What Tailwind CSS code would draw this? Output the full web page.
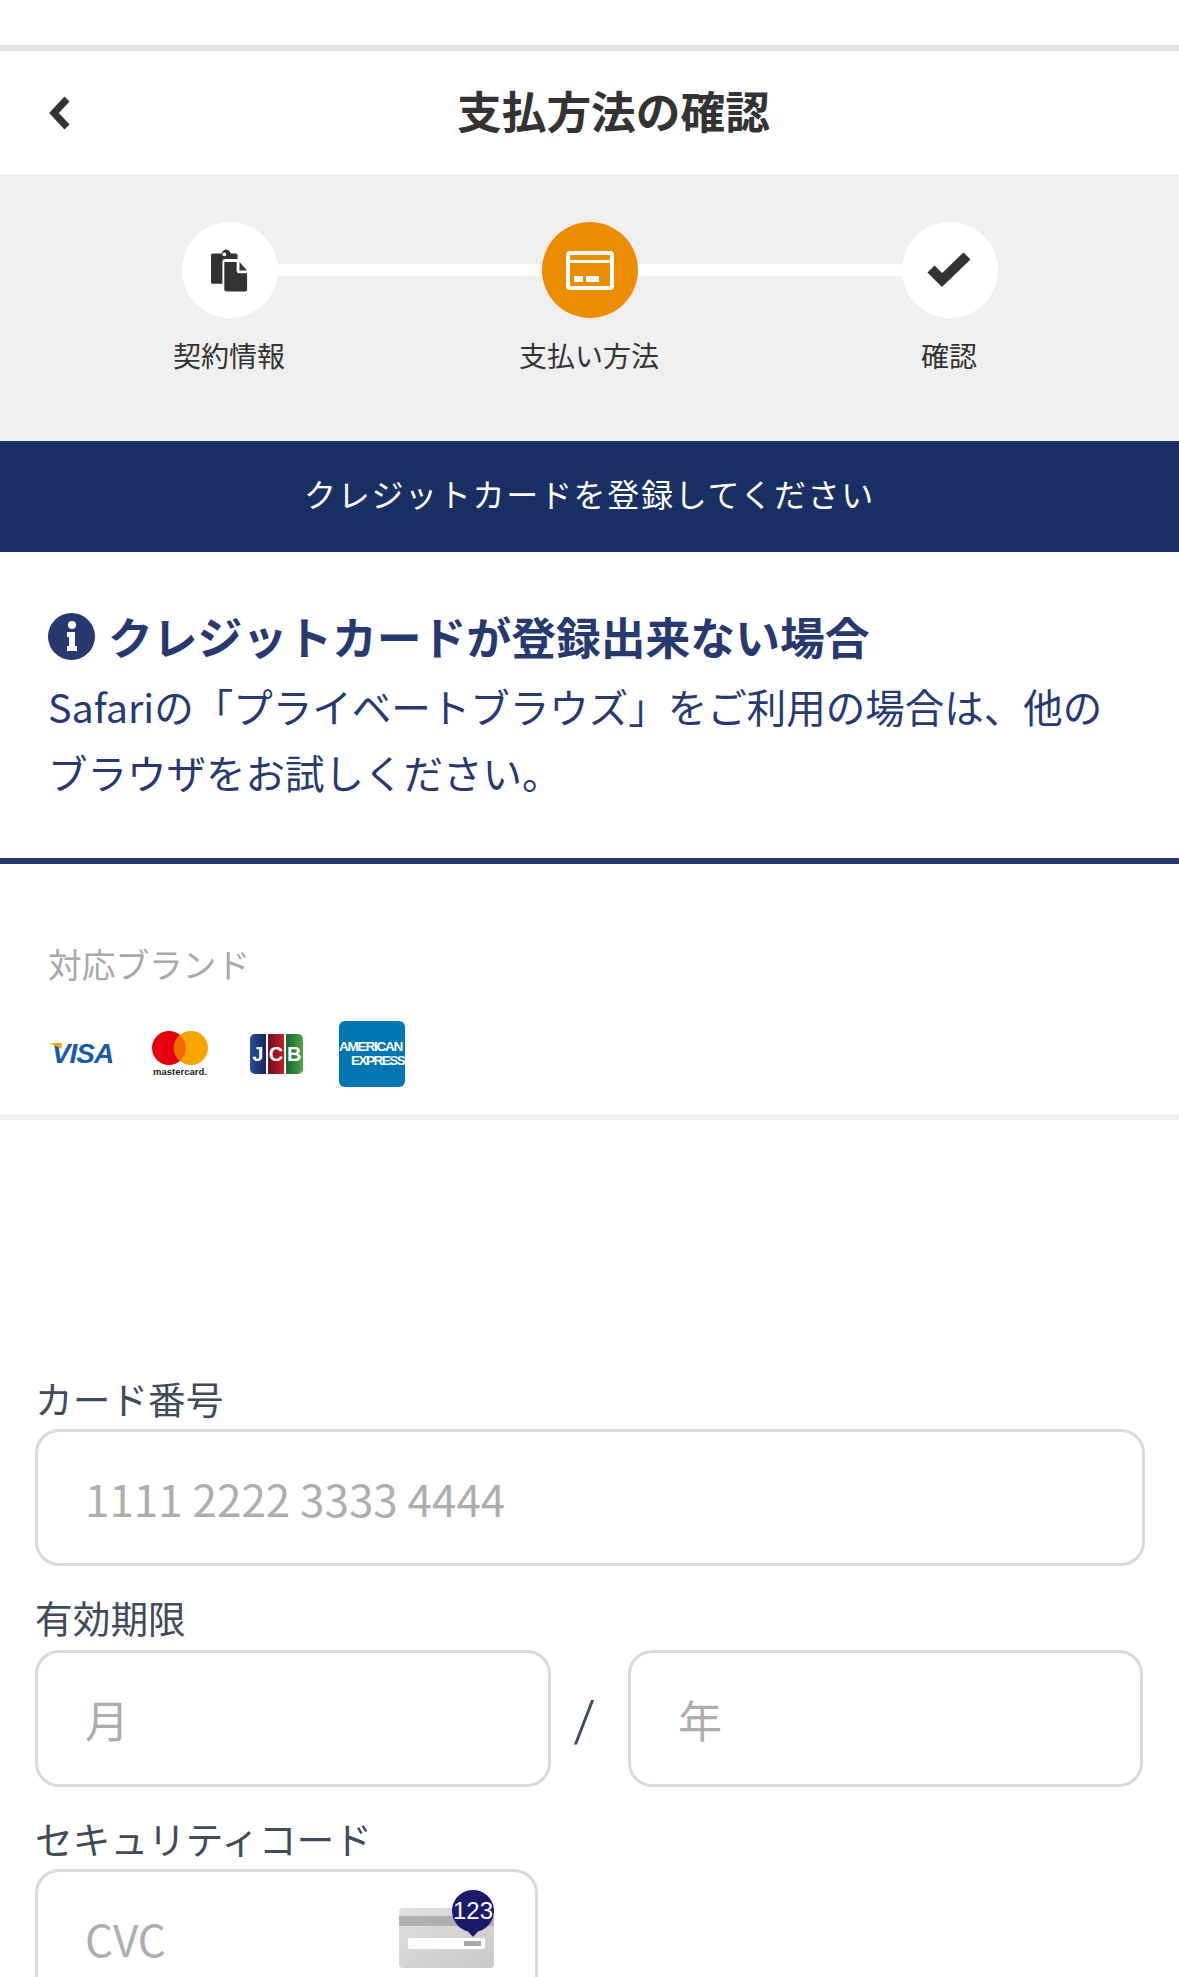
<!DOCTYPE html>
<html lang="ja">
    <head>
        <meta charset="UTF-8">
        <meta name="viewport" content="width=device-width, initial-scale=1.0">
        <title>支払方法の確認</title>
        <script src="https://cdn.jsdelivr.net/npm/@tailwindcss/browser@4"></script>
    </head>
    <body class="bg-white h-[1977px] overflow-hidden font-['Noto_Sans_CJK_JP','Noto_Sans',sans-serif] text-[#333]">
        <div class="h-[45px]"></div>
        <div class="h-[6px] bg-[#e3e3e3]"></div>

        <!-- header -->
        <header class="h-[123px] flex items-center">
            <svg class="ml-[48px] w-[24px] h-[34px]" viewBox="0 0 24 34"><path d="M19 3 L6 17 L19 31" fill="none" stroke="#333" stroke-width="7"/></svg>
            <h1 class="ml-[385px] mb-[5px] text-[44.7px] font-bold leading-none">支払方法の確認</h1>
        </header>

        <!-- stepper -->
        <section class="h-[267px] bg-[#efefef] pt-[48px]">
            <div class="flex items-center pl-[182px] pr-[181px]">
                <div class="w-[96px] h-[96px] rounded-full bg-white flex items-center justify-center">
                    <svg class="w-[38px] h-[43px]" viewBox="0 0 40 44">
                        <path d="M2 4 H11 Q13 0 16 0 Q19 0 21 4 H26 Q28 4 28 6 V10 H15 Q12 10 12 13 V36 H2 Q0 36 0 34 V6 Q0 4 2 4 Z" fill="#333"/>
                        <circle cx="14" cy="5" r="2" fill="#fff"/>
                        <path d="M15 13 H27 V22 Q27 25 30 25 H38 V42 Q38 44 36 44 H17 Q14 44 14 42 V14 Q14 13 15 13 Z M30 13 L38 22 H30 Z" fill="#333"/>
                    </svg>
                </div>
                <div class="flex-1 h-[12px] bg-white"></div>
                <div class="w-[96px] h-[96px] rounded-full bg-[#ec8c00] flex items-center justify-center">
                    <svg class="w-[48px] h-[39px]" viewBox="0 0 48 39">
                        <path fill-rule="evenodd" d="M4 0 H44 Q48 0 48 4 V35 Q48 39 44 39 H4 Q0 39 0 35 V4 Q0 0 4 0 Z M4 4 V9 H44 V4 Z M4 12 V35 H44 V12 Z" fill="#fff"/>
                        <rect x="8" y="25" width="9" height="6" fill="#fff"/>
                        <rect x="20" y="25" width="13" height="6" fill="#fff"/>
                    </svg>
                </div>
                <div class="flex-1 h-[12px] bg-white"></div>
                <div class="w-[96px] h-[96px] rounded-full bg-white flex items-center justify-center">
                    <svg class="w-[46px] h-[36px] mr-[3px]" viewBox="0 0 46 36"><path d="M5 17 L16 28 L41 4" fill="none" stroke="#333" stroke-width="10"/></svg>
                </div>
            </div>
            <div class="grid grid-cols-3 w-[1080px] ml-[49px] mt-[17px] text-center text-[28px] leading-[40px]">
                <div>契約情報</div>
                <div>支払い方法</div>
                <div>確認</div>
            </div>
        </section>

        <!-- banner -->
        <div class="h-[111px] pb-[8px] bg-[#183063] text-white text-[32px] tracking-[1.7px] flex items-center justify-center">クレジットカードを登録してください</div>

        <!-- notice -->
        <section class="h-[312px] border-b-[6px] border-[#27396f] pl-[48px] pt-[54px] text-[#27396f]">
            <div class="flex items-center h-[60px]">
                <span class="w-[47px] h-[47px] rounded-full bg-[#27396f] flex items-center justify-center">
                    <svg class="w-[12px] h-[30px]" viewBox="0 0 12 30"><circle cx="6" cy="4" r="4" fill="#fff"/><path d="M1 11 H9 V25 H11 V30 H1 V25 H3 V16 H1 Z" fill="#fff"/></svg>
                </span>
                <h2 class="ml-[13px] text-[44.8px] font-bold leading-none">クレジットカードが登録出来ない場合</h2>
            </div>
            <p class="mt-[7px] text-[39.5px] leading-[65.5px] whitespace-nowrap">Safariの「プライベートブラウズ」をご利用の場合は、他の<br>ブラウザをお試しください。</p>
        </section>

        <!-- brands -->
        <section class="h-[256px] border-b-[6px] border-[#f0f0f0] pl-[48px] pt-[76px]">
            <div class="text-[33.7px] leading-[48px] text-[#a8a8a8]">対応ブランド</div>
            <div class="flex items-center mt-[33px] h-[66px] -ml-[12px]">
                <div class="w-[96px] flex justify-center pr-[3px]">
                    <div class="relative italic font-bold text-[28px] leading-[30px] tracking-[-1px] text-[#1a5ba6] font-['Liberation_Sans',sans-serif]">
                        VISA
                        <span class="absolute -left-[2px] top-[4px] w-[12px] h-[6px] bg-[#f2a81e] [clip-path:polygon(0_0,100%_0,100%_100%)]"></span>
                    </div>
                </div>
                <div class="w-[96px] flex flex-col items-center">
                    <svg class="w-[56px] h-[34px]" viewBox="0 0 56 34"><circle cx="17" cy="17" r="17" fill="#e60012"/><circle cx="39" cy="17" r="17" fill="#f7a600"/><path d="M28 4 A17 17 0 0 1 28 30 A17 17 0 0 1 28 4 Z" fill="#f06a00"/></svg>
                    <span class="mt-[1px] text-[9.5px] leading-[11px] font-bold text-[#222] font-['Liberation_Sans',sans-serif]">mastercard.</span>
                </div>
                <div class="w-[96px] flex justify-center">
                    <div class="w-[53px] h-[40px] flex gap-[1.5px] text-white text-[20px] font-bold leading-[40px] text-center font-['Liberation_Sans',sans-serif]">
                        <div class="flex-1 rounded-l-[5px] bg-gradient-to-r from-[#2a4f96] to-[#12285f]">J</div>
                        <div class="flex-1 bg-gradient-to-r from-[#6f0f1a] to-[#c3202c]">C</div>
                        <div class="flex-1 rounded-r-[5px] bg-gradient-to-r from-[#17682f] to-[#4da64b]">B</div>
                    </div>
                </div>
                <div class="w-[96px] flex justify-center">
                    <div class="w-[66px] h-[66px] rounded-[6px] bg-[#0077b3] overflow-hidden flex flex-col justify-center text-white font-bold text-[13.5px] leading-[14px] font-['Liberation_Sans',sans-serif]">
                        <span class="whitespace-nowrap tracking-[-1.2px]">AMERICAN</span>
                        <span class="whitespace-nowrap pl-[12px] tracking-[-1.5px]">EXPRESS</span>
                    </div>
                </div>
            </div>
        </section>

        <!-- form -->
        <form class="pl-[35px] pr-[34px] pt-[255px]">
            <label class="block mb-[8px] text-[37.7px] leading-[46px] text-[#3f4b57]">カード番号</label>
            <div class="h-[137px] border-[3px] border-[#d9d9d9] rounded-[24px] pl-[47px] flex items-center text-[44px] text-[#adadad]">1111 2222 3333 4444</div>
            <label class="block mt-[28px] mb-[10px] text-[37.7px] leading-[46px] text-[#3f4b57]">有効期限</label>
            <div class="flex items-center">
                <div class="w-[516px] h-[137px] border-[3px] border-[#d9d9d9] rounded-[24px] pl-[47px] flex items-center text-[44px] text-[#adadad]">月</div>
                <div class="w-[77px] pr-[10px] mt-[6px] text-center text-[58px] font-light text-[#3f4b57] font-['Roboto',sans-serif]">/</div>
                <div class="w-[515px] h-[137px] border-[3px] border-[#d9d9d9] rounded-[24px] pl-[47px] flex items-center text-[44px] text-[#adadad]">年</div>
            </div>
            <label class="block mt-[28px] mb-[8px] text-[37.7px] leading-[46px] text-[#3f4b57]">セキュリティコード</label>
            <div class="relative w-[503px] h-[137px] border-[3px] border-[#d9d9d9] rounded-[24px] pl-[47px] flex items-center text-[44px] text-[#adadad]">
                CVC
                <div class="absolute left-[361px] top-[36px] w-[95px] h-[60px] rounded-[4px] bg-gradient-to-br from-[#e0e0e0] to-[#c8c8c8]">
                    <div class="mt-[8px] h-[10px] bg-[#b0b0b0]"></div>
                    <div class="mt-[12px] mx-[9px] h-[11px] rounded-[2px] bg-white flex justify-end items-center pr-[4px]">
                        <div class="w-[17px] h-[5px] bg-[#a9a9a9]"></div>
                    </div>
                </div>
                <svg class="absolute left-[414px] top-[18px] w-[42px] h-[48px]" viewBox="0 0 42 48"><path d="M21 0 A21 21 0 0 1 26 41.4 L21 47 L16 41.4 A21 21 0 0 1 21 0 Z" fill="#1c1a6b"/></svg>
                <div class="absolute left-[414px] top-[18px] w-[42px] text-white text-[24px] leading-[42px] text-center font-['Liberation_Sans',sans-serif]">123</div>
            </div>
        </form>
    </body>
</html>
